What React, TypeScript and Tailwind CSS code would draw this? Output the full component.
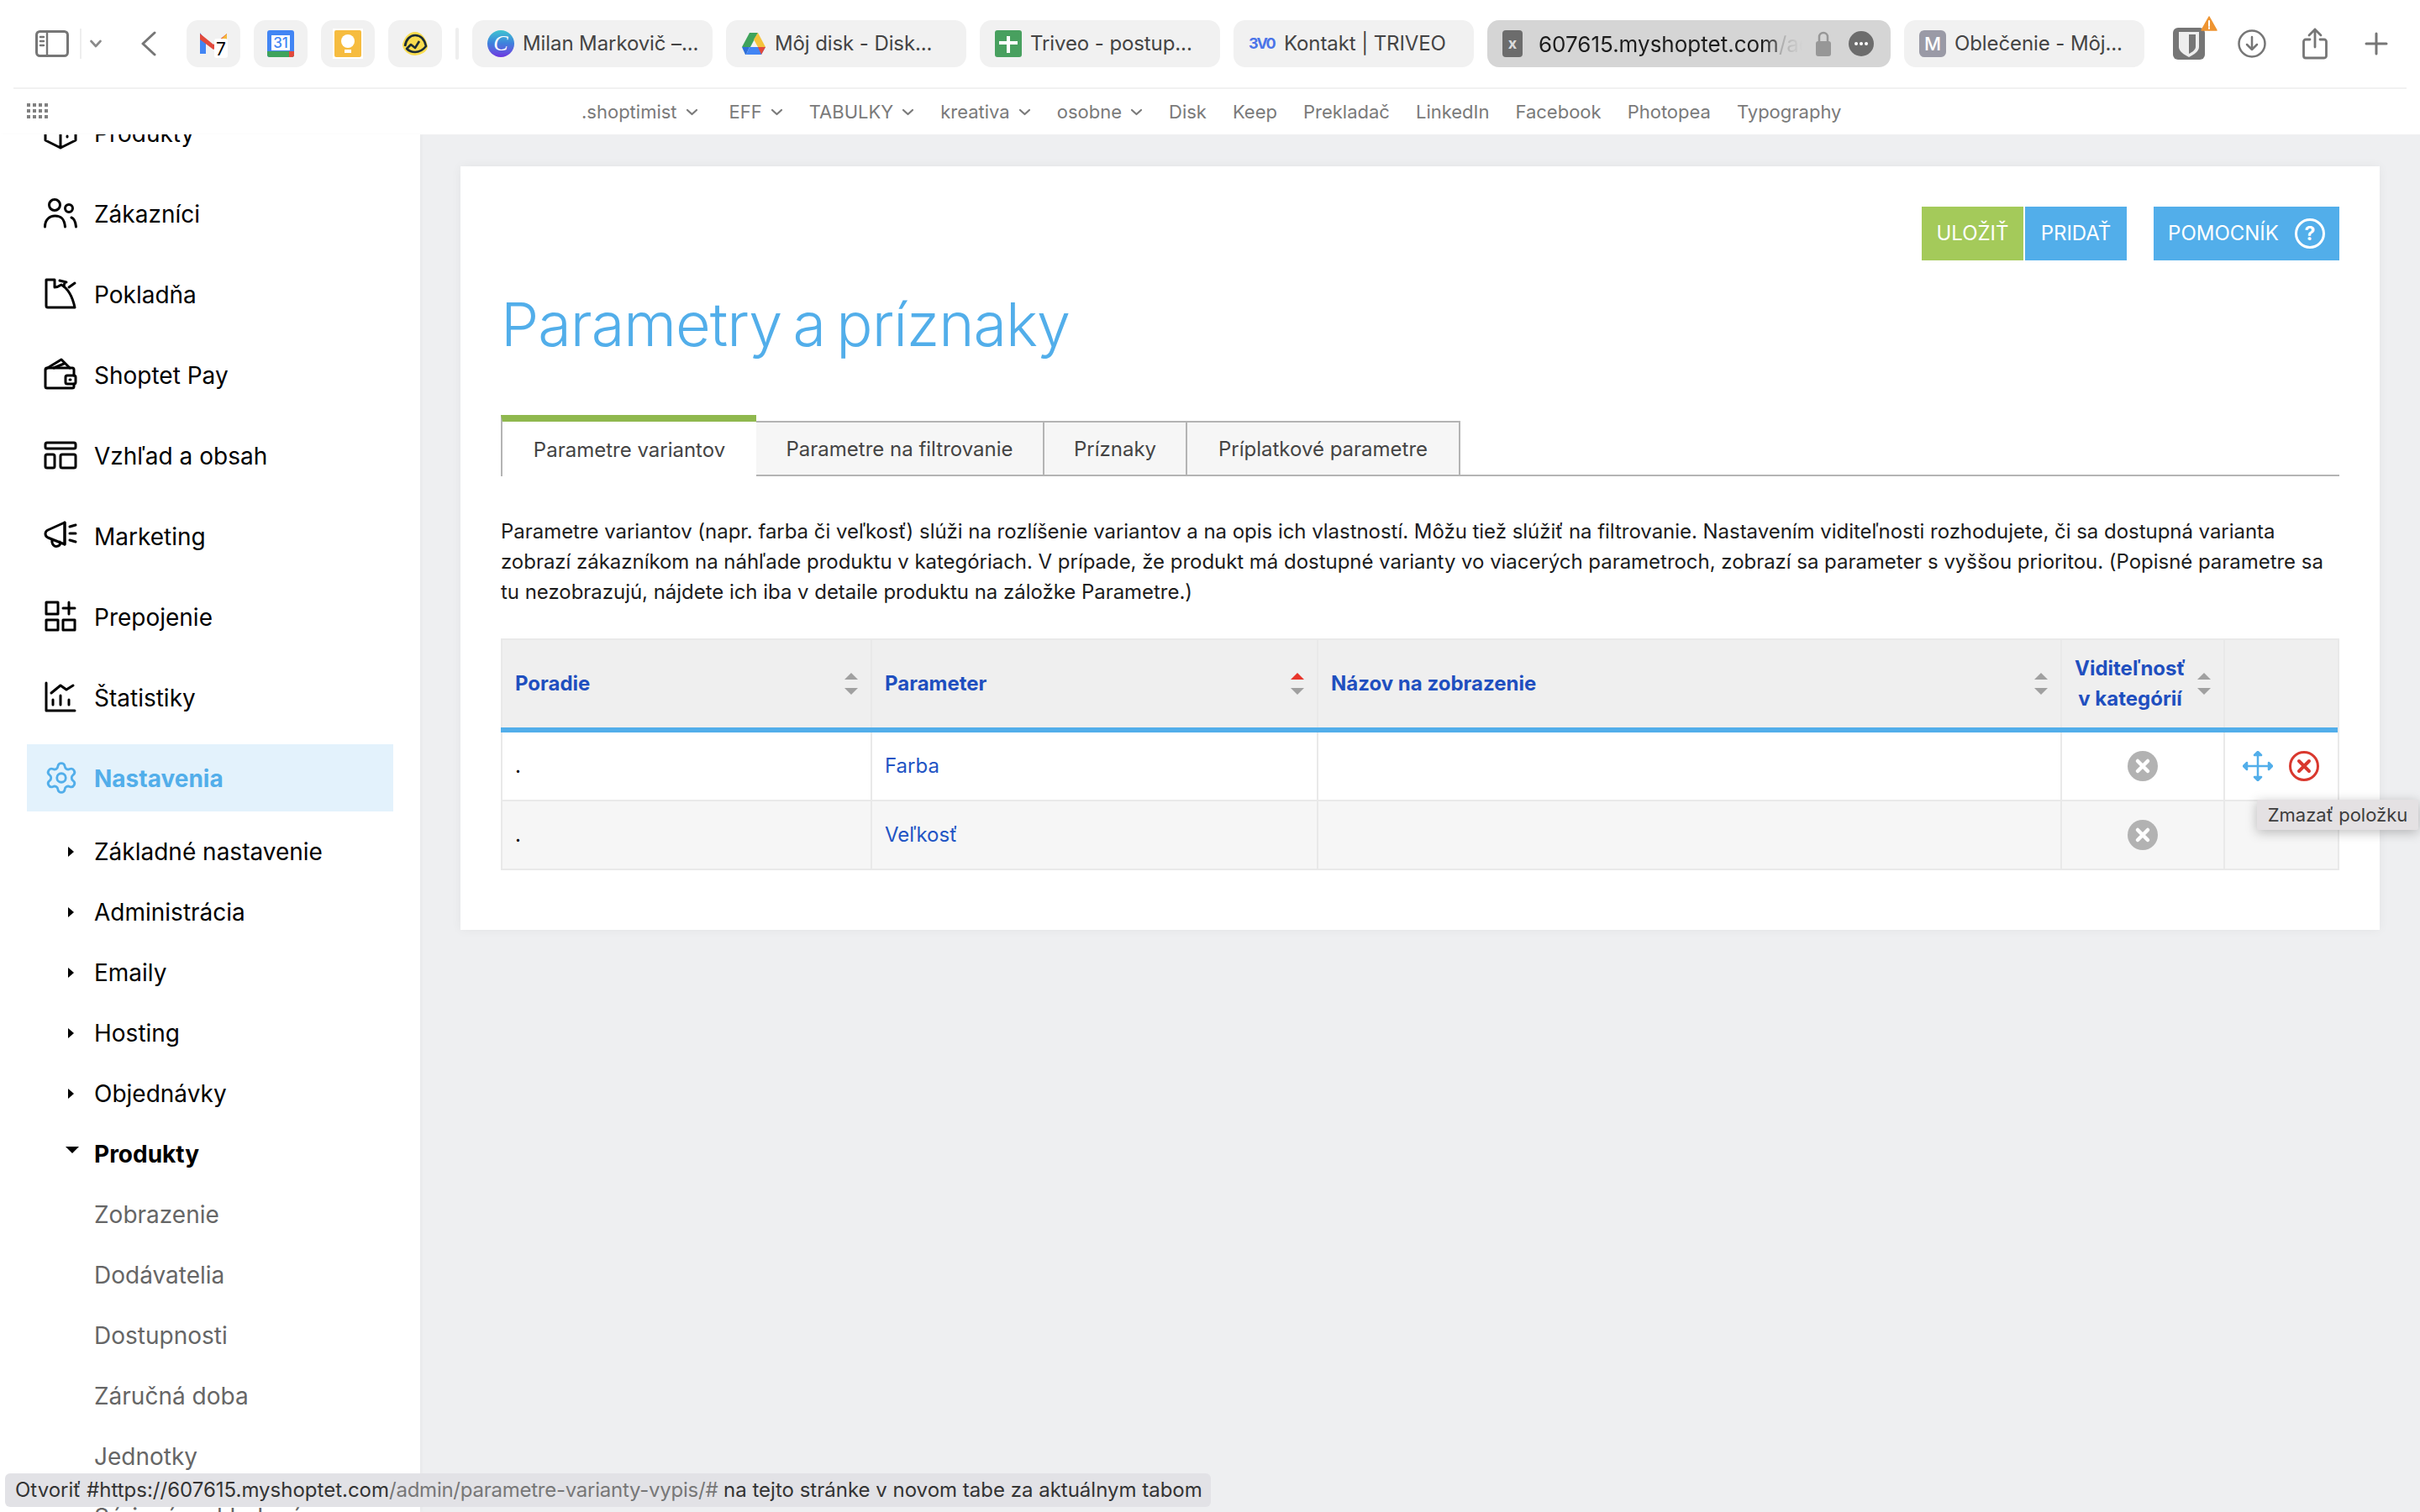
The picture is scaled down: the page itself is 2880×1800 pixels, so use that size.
import { ReactNode } from 'react';
import { Settings } from 'lucide-react';

type BrowserTab = { label: string; icon: ReactNode };

const GmailIcon = () => (
  <svg width="34" height="34" viewBox="0 0 34 34">
    <path d="M1 4v25h7V13z" fill="#4285f4" />
    <path d="M1 5l16 13L33 5v7L17 24 1 12z" fill="#e2493c" />
    <path d="M26 12l7-7v8l-7 6z" fill="#f4b93b" />
    <path d="M26 19l7-6v16h-7z" fill="#3fa35b" />
    <rect x="18" y="11" width="16" height="23" rx="3" fill="#fff" />
    <text x="26" y="31" textAnchor="middle" fontSize="21" fill="#000" fontFamily="Inter, sans-serif">7</text>
  </svg>
);

const CalendarIcon = () => (
  <div className="relative flex h-8 w-8 flex-col overflow-hidden rounded-[3px] bg-[#4285f4]">
    <div className="mx-[5px] mt-[6px] flex h-[18px] items-center justify-center bg-white text-[17px] leading-none font-medium text-[#4285f4]">31</div>
    <div className="absolute right-0 bottom-0 left-0 h-[7px] bg-[#3fa35b]" />
    <div className="absolute right-0 bottom-0 h-[7px] w-[6px] bg-[#e2493c]" />
  </div>
);

const KeepIcon = () => (
  <svg width="36" height="36" viewBox="0 0 36 36">
    <rect width="36" height="36" fill="#fff" />
    <rect x="2" y="2" width="32" height="32" rx="2" fill="#f6bc3f" />
    <circle cx="18" cy="15" r="8" fill="#fff" />
    <rect x="14" y="25" width="8" height="4" fill="#fff" />
  </svg>
);

const BasecampIcon = () => (
  <svg width="32" height="28" viewBox="0 0 32 28">
    <path d="M2 15C4 6 10 1 16 1s12 6 14 16c0 6-8 10-14 10S2 22 2 15z" fill="#f9dc4e" stroke="#f9dc4e" strokeWidth="2" />
    <path d="M4 17C5 9 10 4 16 4s11 4 13 13c-4 5-9 7-13 7-4 0-8-2-10-4l5-5 5 4 5-8" fill="none" stroke="#1d2d35" strokeWidth="2.6" strokeLinejoin="round" />
  </svg>
);

const CanvaIcon = () => (
  <div className="flex h-8 w-8 items-center justify-center rounded-full bg-gradient-to-b from-[#3fc4cf] via-[#3f7fdc] to-[#6a32e0] font-['Liberation_Serif',serif] text-[26px] leading-none text-white italic">C</div>
);

const DriveIcon = () => (
  <svg width="30" height="28" viewBox="0 0 30 28">
    <path d="M10 1h10l-9 17H1z" fill="#3fa35b" />
    <path d="M20 1l9 17H20L15 9z" fill="#f4c33b" />
    <path d="M1 18h9l-4 9H5z" fill="#2e6fd9" />
    <path d="M10 18h19l-5 9H6z" fill="#4285f4" />
    <path d="M20 18h9l-5 9z" fill="#e2493c" />
  </svg>
);

const SheetsIcon = () => (
  <div className="relative h-8 w-8 rounded-[3px] bg-[#48a05f]">
    <div className="absolute top-[7px] bottom-[5px] left-[14px] w-[4px] bg-white" />
    <div className="absolute top-[13px] right-[5px] left-[5px] h-[4px] bg-white" />
  </div>
);

const TriveoIcon = () => (
  <div className="w-8 text-[18px] leading-[18px] font-bold tracking-[-2px] text-[#4b74e8]">3V0</div>
);

const ShopIcon = () => (
  <div className="flex h-8 w-6 items-center justify-center rounded-[4px] bg-[#6c6c6c] text-[18px] leading-none font-bold text-[#dcdcdc]">x</div>
);

const LetterIcon = () => (
  <div className="flex h-8 w-8 items-center justify-center rounded-[6px] bg-[#9a9aa6] text-[22px] leading-none font-medium text-white">M</div>
);

const browserTabs: BrowserTab[] = [
  { label: 'Milan Markovič –...', icon: <CanvaIcon /> },
  { label: 'Môj disk - Disk...', icon: <DriveIcon /> },
  { label: 'Triveo - postup...', icon: <SheetsIcon /> },
  { label: 'Kontakt | TRIVEO', icon: <TriveoIcon /> },
];

const bookmarks = [
  { label: '.shoptimist', menu: true },
  { label: 'EFF', menu: true },
  { label: 'TABULKY', menu: true },
  { label: 'kreativa', menu: true },
  { label: 'osobne', menu: true },
  { label: 'Disk' },
  { label: 'Keep' },
  { label: 'Prekladač' },
  { label: 'LinkedIn' },
  { label: 'Facebook' },
  { label: 'Photopea' },
  { label: 'Typography' },
];

const Stroke = ({ children }: { children: ReactNode }) => (
  <svg width="40" height="40" viewBox="0 0 40 40" fill="none" stroke="#000" strokeWidth="3" strokeLinecap="round" strokeLinejoin="round">
    {children}
  </svg>
);

const menuItems: { label: string; icon: ReactNode }[] = [
  {
    label: 'Produkty',
    icon: (
      <Stroke>
        <path d="M2 20v9l18 9 18-9v-9M20 38V18M2 21l18-8 18 8" />
        <path d="M28 24v1" />
      </Stroke>
    ),
  },
  {
    label: 'Zákazníci',
    icon: (
      <Stroke>
        <circle cx="13" cy="10" r="6.5" />
        <circle cx="30" cy="14" r="4.5" />
        <path d="M1.5 36c0-8 5-13 12-13s11 3 12 13M33 25c3 1 5 6 5.5 11" />
      </Stroke>
    ),
  },
  {
    label: 'Pokladňa',
    icon: (
      <Stroke>
        <path d="M3 3h10v9c3 0 5-1 8-3 7 4 13 13 16 27H5a2 2 0 0 1-2-2z" />
        <path d="M19 4l8 2M25 6l-1 5M30 12l7-5" />
      </Stroke>
    ),
  },
  {
    label: 'Shoptet Pay',
    icon: (
      <Stroke>
        <path d="M36 21v-7a2 2 0 0 0-2-2H4a2 2 0 0 0-2 2v20a2 2 0 0 0 2 2h30a2 2 0 0 0 2-2v-3" />
        <path d="M3 13L21 2l10 10M12 12l12-5" />
        <rect x="26" y="21" width="12" height="10" rx="2" />
        <path d="M31 26h1" />
      </Stroke>
    ),
  },
  {
    label: 'Vzhľad a obsah',
    icon: (
      <Stroke>
        <rect x="2" y="5" width="36" height="7" rx="2" />
        <rect x="2" y="19" width="11" height="16" rx="2" />
        <rect x="20" y="19" width="18" height="16" rx="2" />
      </Stroke>
    ),
  },
  {
    label: 'Marketing',
    icon: (
      <Stroke>
        <path d="M25 4L5 13c-4 2-4 7 0 9l20 8zM10 24c-1 6 3 10 7 8 3-1 3-3 2-5" />
        <path d="M25 4v26M31 9l7-2M31 17h7M31 25l7 2" />
      </Stroke>
    ),
  },
  {
    label: 'Prepojenie',
    icon: (
      <Stroke>
        <rect x="3" y="3" width="14" height="14" />
        <rect x="3" y="24" width="14" height="12" />
        <rect x="23" y="24" width="14" height="12" />
        <path d="M30 3v14M23 10h14" />
      </Stroke>
    ),
  },
  {
    label: 'Štatistiky',
    icon: (
      <Stroke>
        <path d="M3 3v33h34" />
        <path d="M9 15l11-9 7 5 8-5M11 23v6M20 18v11M30 23v6" />
      </Stroke>
    ),
  },
];

const subItems = [
  { label: 'Základné nastavenie', arrow: 'right' },
  { label: 'Administrácia', arrow: 'right' },
  { label: 'Emaily', arrow: 'right' },
  { label: 'Hosting', arrow: 'right' },
  { label: 'Objednávky', arrow: 'right' },
  { label: 'Produkty', arrow: 'down' },
  { label: 'Zobrazenie' },
  { label: 'Dodávatelia' },
  { label: 'Dostupnosti' },
  { label: 'Záručná doba' },
  { label: 'Jednotky' },
  { label: 'Sériové a skladové' },
];

const tabs = ['Parametre variantov', 'Parametre na filtrovanie', 'Príznaky', 'Príplatkové parametre'];
const tabWidths = ['w-[304px]', 'w-[343px]', 'w-[170px]', 'w-[325px]'];

function Toolbar() {
  return (
    <div className="flex h-[104px] items-center pl-[42px]">
      <svg width="40" height="32" viewBox="0 0 40 32" fill="none" stroke="#767676" strokeWidth="3" strokeLinecap="round">
        <rect x="1.5" y="1.5" width="37" height="29" rx="4" />
        <path d="M14 2v28M6 8h4M6 13h4M6 18h4" strokeWidth="2.4" />
      </svg>
      <div className="ml-[13px] h-9 w-0.5 bg-[#eeeeee]" />
      <svg className="ml-2.5" width="14" height="10" viewBox="0 0 14 10" fill="none" stroke="#8a8a8a" strokeWidth="2.6" strokeLinecap="round" strokeLinejoin="round">
        <path d="M1.5 2L7 8l5.5-6" />
      </svg>
      <svg className="ml-[47px]" width="18" height="30" viewBox="0 0 18 30" fill="none" stroke="#767676" strokeWidth="3" strokeLinecap="round" strokeLinejoin="round">
        <path d="M16 2L2 15l14 13" />
      </svg>
      <div className="ml-9 flex gap-4">
        <div className="flex h-14 w-16 items-center justify-center rounded-[14px] bg-[#f1f1f1]"><GmailIcon /></div>
        <div className="flex h-14 w-16 items-center justify-center rounded-[14px] bg-[#f1f1f1]"><CalendarIcon /></div>
        <div className="flex h-14 w-16 items-center justify-center rounded-[14px] bg-[#f1f1f1]"><KeepIcon /></div>
        <div className="flex h-14 w-16 items-center justify-center rounded-[14px] bg-[#f1f1f1]"><BasecampIcon /></div>
      </div>
      <div className="mx-4 h-[38px] w-1 rounded-full bg-[#eeeeee]" />
      <div className="flex gap-4">
        {browserTabs.map((tab) => (
          <div key={tab.label} className="flex h-14 w-[286px] items-center gap-2.5 rounded-[14px] bg-[#f1f1f1] pl-[18px]">
            {tab.icon}
            <span className="text-[24px] tracking-[-0.1px] whitespace-nowrap text-[#444444]">{tab.label}</span>
          </div>
        ))}
        <div className="flex h-14 w-[480px] items-center rounded-[14px] bg-[#d5d5d5] pl-[18px]">
          <ShopIcon />
          <span className="ml-[19px] w-[314px] overflow-hidden text-[26px] whitespace-nowrap text-[#1c1c1c] [mask-image:linear-gradient(to_right,#000_85%,transparent)]">
            607615.myshoptet.com<span className="text-[#8a8a8a]">/ad</span>
          </span>
          <svg className="ml-[15px]" width="20" height="32" viewBox="0 0 20 32">
            <path d="M5 14V8a5 5 0 0 1 10 0v6" fill="none" stroke="#979797" strokeWidth="2.5" />
            <rect x="1" y="13" width="18" height="18" rx="3" fill="#979797" />
          </svg>
          <div className="ml-5 flex h-[30px] w-[30px] items-center justify-center gap-0.5 rounded-full bg-[#6c6c6c]">
            <span className="h-1 w-1 rounded-full bg-white" />
            <span className="h-1 w-1 rounded-full bg-white" />
            <span className="h-1 w-1 rounded-full bg-white" />
          </div>
        </div>
        <div className="flex h-14 w-[286px] items-center gap-2.5 rounded-[14px] bg-[#f1f1f1] pl-[18px]">
          <LetterIcon />
          <span className="text-[24px] tracking-[-0.1px] whitespace-nowrap text-[#444444]">Oblečenie - Môj...</span>
        </div>
      </div>
      <div className="relative ml-[34px] h-[38px] w-[38px] rounded-[6px] bg-[#767676]">
        <svg className="absolute top-[5px] left-[7px]" width="24" height="30" viewBox="0 0 24 30">
          <path d="M0 0h24v18c0 5-6 9-12 12C6 27 0 23 0 18z" fill="#eeeeee" />
          <path d="M12 3h8v15c0 3-4 6-8 8z" fill="#767676" />
        </svg>
        <svg className="absolute -top-[14px] -right-[15px]" width="20" height="18" viewBox="0 0 20 18">
          <path d="M10 1l9 16H1z" fill="#ee9431" stroke="#ee9431" strokeWidth="1.5" strokeLinejoin="round" />
          <path d="M10 6v6M10 14v1" stroke="#fff" strokeWidth="2" strokeLinecap="round" />
        </svg>
      </div>
      <svg className="ml-[39px]" width="34" height="34" viewBox="0 0 34 34" fill="none" stroke="#767676" strokeWidth="2.5" strokeLinecap="round" strokeLinejoin="round">
        <circle cx="17" cy="17" r="15.5" />
        <path d="M17 9v15M11 18l6 6 6-6" />
      </svg>
      <svg className="ml-[43px]" width="30" height="38" viewBox="0 0 30 38" fill="none" stroke="#767676" strokeWidth="2.8" strokeLinecap="round" strokeLinejoin="round">
        <path d="M9 14H4a2.5 2.5 0 0 0-2.5 2.5v17A2.5 2.5 0 0 0 4 36h22a2.500 2.500 0 0 0 2.500-2.500v-17A2.500 2.500 0 0 0 26 14h-5" />
        <path d="M15 23V2M8 9l7-7 7 7" />
      </svg>
      <svg className="ml-[44px]" width="28" height="28" viewBox="0 0 28 28" fill="none" stroke="#767676" strokeWidth="3" strokeLinecap="round">
        <path d="M14 2v24M2 14h24" />
      </svg>
    </div>
  );
}

function BookmarksBar() {
  return (
    <div className="relative flex h-[54px] items-center justify-start bg-white pl-[692px]">
      <div className="absolute top-[17px] left-8 grid grid-cols-4 gap-x-[3px] gap-y-[3px]">
        {Array.from({ length: 12 }).map((_, i) => (
          <span key={i} className="h-1 w-1 bg-[#808080]" />
        ))}
      </div>
      <div className="flex gap-[31px]">
        {bookmarks.map((b) => (
          <div key={b.label} className="flex items-center gap-2.5 text-[22px] whitespace-nowrap text-[#7a7a7a] first:mr-[6px]">
            {b.label}
            {b.menu && (
              <svg width="15" height="9" viewBox="0 0 15 9" fill="none" stroke="#7a7a7a" strokeWidth="2.2" strokeLinecap="round" strokeLinejoin="round">
                <path d="M2 2l5.500 5 5.500-5" />
              </svg>
            )}
          </div>
        ))}
      </div>
    </div>
  );
}

function Sidebar() {
  return (
    <aside className="relative z-10 h-full w-[500px] shrink-0 overflow-hidden bg-white shadow-[2px_0_4px_rgba(0,0,0,0.03)]">
      <div className="-mt-[50px]">
        {menuItems.map((item) => (
          <div key={item.label} className="flex h-24 items-center gap-5 pl-[52px] text-[28px] text-black">
            {item.icon}
            <span className="pt-0.5">{item.label}</span>
          </div>
        ))}
        <div className="mx-8 my-2 flex h-20 w-[436px] items-center gap-[18px] bg-[#e3f2fc] pl-5 text-[28px] font-bold text-[#52aeea]">
          <Settings size={42} strokeWidth={1.6} color="#52aeea" />
          <span className="pt-0.5">Nastavenia</span>
        </div>
        <div className="mt-3">
          {subItems.map((item) => (
            <div key={item.label} className="relative flex h-[72px] items-center pl-[112px] text-[28px]">
              {item.arrow === 'right' && <span className="absolute left-[81px] h-0 w-0 border-y-[6px] border-l-[7px] border-y-transparent border-l-black" />}
              {item.arrow === 'down' && <span className="absolute top-[27px] left-[78px] h-0 w-0 border-x-[8px] border-t-[8px] border-x-transparent border-t-black" />}
              <span className={item.arrow === 'down' ? 'font-bold text-black' : item.arrow ? 'text-black' : 'text-[#666666]'}>{item.label}</span>
            </div>
          ))}
        </div>
      </div>
    </aside>
  );
}

const SortArrows = ({ active }: { active?: boolean }) => (
  <svg width="16" height="26" viewBox="0 0 16 26" className="shrink-0">
    <path d="M8 0l8 8H0z" fill={active ? '#e8352b' : '#a0a0a0'} />
    <path d="M8 26l8-8H0z" fill="#a0a0a0" />
  </svg>
);

const HiddenMark = () => (
  <svg width="36" height="36" viewBox="0 0 36 36">
    <circle cx="18" cy="18" r="18" fill="#b2b2b2" />
    <path d="M12 12l12 12M24 12L12 24" stroke="#fff" strokeWidth="4.500" strokeLinecap="round" />
  </svg>
);

const cellClass = 'flex items-center border-l-2 border-[#e9e9e9]';
const headClass = 'text-[24px] font-bold text-[#1f4fbf]';

function ParamsTable() {
  return (
    <div className="mt-[37px] border-r-2 border-b-2 border-[#e9e9e9] text-[24px]">
      <div className="grid h-[112px] grid-cols-[440px_531px_885px_194px_138px] border-t-2 border-b-[6px] border-t-[#e9e9e9] border-b-[#52aeea] bg-[#efefef]">
        <div className={`${cellClass} justify-between pr-[15px] pl-[15px]`}>
          <span className={headClass}>Poradie</span>
          <SortArrows />
        </div>
        <div className={`${cellClass} justify-between pr-[15px] pl-[15px]`}>
          <span className={headClass}>Parameter</span>
          <SortArrows active />
        </div>
        <div className={`${cellClass} justify-between pr-[15px] pl-[15px]`}>
          <span className={headClass}>Názov na zobrazenie</span>
          <SortArrows />
        </div>
        <div className={`${cellClass} justify-between pr-[15px] pl-[15px]`}>
          <span className={`${headClass} text-center leading-9`}>Viditeľnosť<br />v kategórií</span>
          <SortArrows />
        </div>
        <div className={cellClass} />
      </div>
      <div className="grid h-[82px] grid-cols-[440px_531px_885px_194px_138px] border-b-2 border-[#e9e9e9] bg-white">
        <div className={`${cellClass} pl-[15px]`}>.</div>
        <div className={`${cellClass} pl-[15px] text-[#2154c4]`}>Farba</div>
        <div className={cellClass} />
        <div className={`${cellClass} justify-center`}><HiddenMark /></div>
        <div className={`${cellClass} gap-[19px] pl-[21px]`}>
          <svg width="36" height="36" viewBox="0 0 36 36" fill="none" stroke="#52aeea" strokeWidth="2.500" strokeLinejoin="round" strokeLinecap="round">
            <path d="M18 4v28M4 18h28" />
            <path d="M14 5l4-4 4 4zM14 31l4 4 4-4zM5 14l-4 4 4 4zM31 14l4 4-4 4z" fill="#52aeea" />
          </svg>
          <svg width="36" height="36" viewBox="0 0 36 36" fill="none" stroke="#d9382e" strokeLinecap="round">
            <circle cx="18" cy="18" r="16.500" strokeWidth="3" />
            <path d="M12 12l12 12M24 12L12 24" strokeWidth="4" />
          </svg>
        </div>
      </div>
      <div className="grid h-20 grid-cols-[440px_531px_885px_194px_138px] bg-[#f6f6f6]">
        <div className={`${cellClass} pl-[15px]`}>.</div>
        <div className={`${cellClass} pl-[15px] text-[#2154c4]`}>Veľkosť</div>
        <div className={cellClass} />
        <div className={`${cellClass} justify-center`}><HiddenMark /></div>
        <div className={cellClass} />
      </div>
    </div>
  );
}

function Card() {
  return (
    <div className="h-[909px] w-[2284px] bg-white p-12 shadow-[0_0_12px_rgba(0,0,0,0.05)]">
      <div className="flex h-16 justify-end text-[24px] text-white">
        <div className="flex w-[121px] items-center justify-center bg-[#a4ca5a]">ULOŽIŤ</div>
        <div className="ml-0.5 flex w-[121px] items-center justify-center bg-[#52aeea]">PRIDAŤ</div>
        <div className="ml-8 flex w-[221px] items-center justify-center gap-[19px] bg-[#52aeea]">
          POMOCNÍK
          <svg width="36" height="36" viewBox="0 0 36 36" fill="none" stroke="#fff">
            <circle cx="18" cy="18" r="16.500" strokeWidth="3" />
            <text x="18" y="26" textAnchor="middle" fontSize="23" fontWeight="700" fill="#fff" stroke="none" fontFamily="Inter, sans-serif">?</text>
          </svg>
        </div>
      </div>
      <h1 className="mt-[34px] text-[72px] leading-[84px] font-light tracking-[-1px] text-[#52aeea] [word-spacing:-6px]">Parametry a príznaky</h1>
      <div className="mt-[66px] flex h-[73px] items-end border-b-2 border-[#b4b4b4] text-[24px] text-[#444444]">
        {tabs.map((tab, i) =>
          i === 0 ? (
            <div key={tab} className={`${tabWidths[i]} -mb-0.5 flex h-[73px] items-center justify-center border-t-8 border-l-2 border-t-[#8fb84e] border-l-[#b4b4b4] bg-white pt-0.5`}>
              {tab}
            </div>
          ) : (
            <div key={tab} className={`${tabWidths[i]} flex h-[64px] items-center justify-center border-t-2 border-r-2 border-[#b4b4b4] bg-[#f6f6f6] pt-0.5`}>
              {tab}
            </div>
          ),
        )}
      </div>
      <p className="mt-[48px] text-[24px] leading-9 tracking-[-0.035px] text-[#1c1c1c]">
        Parametre variantov (napr. farba či veľkosť) slúži na rozlíšenie variantov a na opis ich vlastností. Môžu tiež slúžiť na filtrovanie. Nastavením viditeľnosti rozhodujete, či sa dostupná varianta zobrazí zákazníkom na náhľade produktu v kategóriach. V prípade, že produkt má dostupné varianty vo viacerých parametroch, zobrazí sa parameter s vyššou prioritou. (Popisné parametre sa tu nezobrazujú, nájdete ich iba v detaile produktu na záložke Parametre.)
      </p>
      <ParamsTable />
    </div>
  );
}

export default function App() {
  return (
    <div className="relative flex h-[1800px] w-[2880px] flex-col overflow-hidden bg-[#eeeff1] font-['Inter',sans-serif]">
      <div className="bg-white">
        <Toolbar />
        <div className="mx-4 h-0.5 bg-[#f1f1f1]" />
        <BookmarksBar />
      </div>
      <div className="flex min-h-0 flex-1">
        <Sidebar />
        <main className="pt-[38px] pl-[48px]">
          <Card />
        </main>
      </div>
      <div className="absolute top-[952px] left-[2686px] z-20 flex h-9 w-[192px] items-center justify-center rounded-[2px] bg-[#e4e1e3] text-[22px] text-[#3d3d3d] shadow-[0_3px_14px_rgba(0,0,0,0.25)]">
        Zmazať položku
      </div>
      <div className="absolute top-[1754px] left-1.5 z-20 flex h-10 w-[1435px] items-center rounded-[6px] bg-[#e2e2e6] pl-3 text-[24px] whitespace-nowrap text-[#333333]">
        Otvoriť #https://607615.myshoptet.com<span className="tracking-[-0.25px] text-[#777777]">/admin/parametre-varianty-vypis/#</span>&nbsp;na tejto stránke v novom tabe za aktuálnym tabom
      </div>
    </div>
  );
}
